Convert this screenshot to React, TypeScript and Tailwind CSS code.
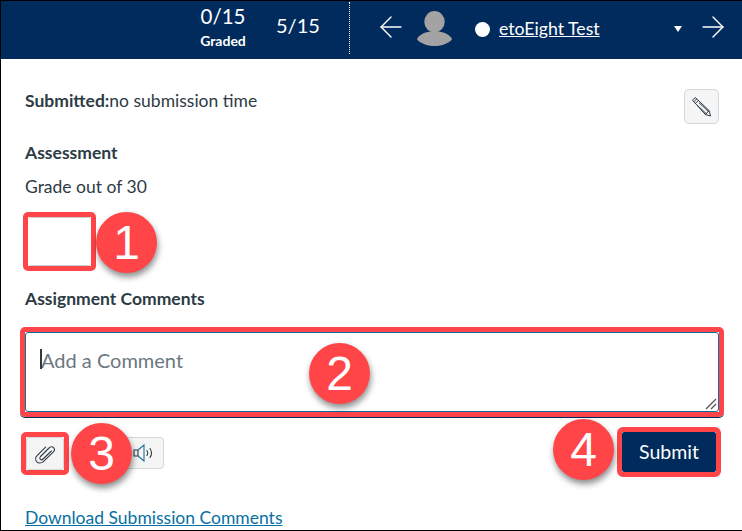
import { ArrowLeft, ArrowRight } from "lucide-react";

function Badge({ n, className }: { n: string; className: string }) {
  return (
    <div
      className={`absolute w-[61px] h-[61px] rounded-full bg-[#ff4548] text-white flex items-center justify-center text-[48px] leading-none font-['Liberation_Sans',sans-serif] shadow-[1px_4px_6px_rgba(0,0,0,0.45)] ${className}`}
    >
      {n}
    </div>
  );
}

function PencilIcon() {
  return (
    <svg width="21" height="22" viewBox="0 0 21 22" fill="none" stroke="#2d3b45" strokeWidth="1">
      <path d="M1.5 4.2 L4.2 1.5 L18 14.5 L19.6 20 L14.4 18.5 Z" />
      <path d="M2.8 5.8 L5.8 2.8 M4.4 7.4 L7.4 4.4 M6 9 L15.6 18 M8 6.8 L17.6 15.6 M14.4 18.5 L18 14.5" />
    </svg>
  );
}

function ClipIcon() {
  return (
    <svg width="22" height="20" viewBox="0 0 22 20" fill="none" stroke="#2d3b45" strokeWidth="1.1" strokeLinecap="round">
      <path d="M6.5 12.5 L15 4 C16.5 2.5 18.6 2.5 19.6 3.6 C20.8 4.9 20.5 6.8 19.2 8.1 L9.3 17.6 C7.4 19.4 4.4 19.4 2.8 17.8 C1.2 16.1 1.3 13.4 3.1 11.6 L11.6 3.2" />
      <path d="M6.5 12.5 C5.6 13.5 5.6 14.6 6.3 15.3 C7 16 8.2 15.9 9.1 15 L17.3 7" />
    </svg>
  );
}

function SpeakerIcon() {
  return (
    <svg width="21" height="18" viewBox="0 0 21 18" fill="none" stroke="#2d3b45" strokeWidth="1.1">
      <path d="M1 6 H5 V12 H1 Z" />
      <path d="M5 6 L11 1 V17 L5 12" stroke="#1f6f9f" />
      <path d="M14 6.5 C15 8 15 10 14 11.5 M17 4.5 C19 7 19 11 17 13.5" strokeLinecap="round" />
    </svg>
  );
}

export default function App() {
  return (
    <div className="relative w-[742px] h-[531px] bg-white overflow-hidden border-l border-b border-t border-black font-['Lato','Open_Sans',sans-serif] text-[#2d3b45]">
      {/* top bar */}
      <header className="h-[58px] bg-[#002b5c] text-white flex items-center -ml-px">
        <div className="ml-[198px] w-[50px] flex flex-col items-center mb-[4px]">
          <span className="text-[20.5px] leading-[26px]">0/15</span>
          <span className="text-[14px] leading-[24px] font-bold">Graded</span>
        </div>
        <span className="ml-[28px] text-[20px] leading-none w-[46px] mb-[10px]">5/15</span>
        <div className="ml-[27px] self-start mt-[1px] h-[52px] border-l border-dotted border-white" />
        <ArrowLeft size={34} strokeWidth={1} className="ml-[24px] mb-[6px]" />
        <svg className="ml-[9px] mb-[4px]" width="35" height="35" viewBox="0 0 36 36" fill="#a3a3a3">
          <ellipse cx="18" cy="11" rx="10.5" ry="11" />
          <path d="M0 29 C2 24 8 22 13 21 H23 C28 22 34 24 36 29 C33 33 26 36 18 36 C10 36 3 33 0 29 Z" />
        </svg>
        <span className="ml-[23px] w-[15px] h-[15px] rounded-full bg-white mb-[2px]" />
        <span className="ml-[9px] w-[175px] text-[17.7px] leading-none underline mb-[2px]">etoEight Test</span>
        <span className="w-0 h-0 border-x-[4.5px] border-x-transparent border-t-[6px] border-t-white mb-[2px]" />
        <ArrowRight size={34} strokeWidth={1} className="ml-[14px] mb-[6px]" />
      </header>

      {/* grading form */}
      <main className="pl-[24px] pr-[23px]">
        <div className="flex items-start justify-between pt-[30px]">
          <p className="text-[17.5px] leading-[24px]">
            <b className="font-bold">Submitted:</b>no submission time
          </p>
          <button className="w-[35px] h-[35px] rounded-[5px] border border-[#d3d8dc] bg-[#f5f5f5] flex items-center justify-center">
            <PencilIcon />
          </button>
        </div>
        <h2 className="text-[17.5px] leading-[24px] font-bold mt-[17px]">Assessment</h2>
        <p className="text-[17.5px] leading-[24px] mt-[10px]">Grade out of 30</p>
        <div className="mt-[13px] -ml-[2px] w-[73px] h-[59px] rounded-[5px] border-[5px] border-[#ff4548]">
          <div className="w-full h-full border-y border-[#c7cdd1] rounded-[3px] bg-white" />
        </div>
        <h2 className="text-[17.5px] leading-[24px] font-bold mt-[16px]">Assignment Comments</h2>
        <div className="relative mt-[16px] -ml-[5px] w-[704px] h-[90px] rounded-[5px] border-[5px] border-[#ff4548] shadow-[0_1px_0_0_#002b5c]">
          <div className="h-full border border-[#0770a3] rounded-[3px] bg-white pl-[15px] pt-[15px] text-[20px] leading-[24px] text-[#6b7780] relative">
            <span className="absolute left-[14px] top-[16px] w-[2px] h-[20px] bg-[#2d3b45]" />
            Add a Comment
            <svg className="absolute right-[1px] bottom-[1px]" width="12" height="12" viewBox="0 0 12 12" stroke="#555" strokeWidth="1.3">
              <path d="M1 11 L11 1 M6 11 L11 6" />
            </svg>
          </div>
        </div>
        <div className="flex items-start mt-[15px]">
          <div className="-ml-[4px] w-[48px] h-[43px] rounded-[5px] border-[5px] border-[#ff4548]">
            <button className="w-full h-full border border-[#d3d8dc] bg-[#f5f5f5] rounded-[3px] flex items-center justify-center">
              <ClipIcon />
            </button>
          </div>
          <button className="ml-[50px] mt-[5px] w-[45px] h-[32px] border border-[#d3d8dc] bg-[#f5f5f5] rounded-[4px] flex items-center justify-end pr-[9px]">
            <SpeakerIcon />
          </button>
          <div className="ml-auto -mt-[5px] mr-[-2px] w-[104px] h-[50px] rounded-[6px] border-[5px] border-[#ff4548]">
            <button className="w-full h-full bg-[#002b5c] text-white text-[19.5px] leading-none rounded-[2px]">Submit</button>
          </div>
        </div>
        <a className="block mt-[29px] text-[17.5px] leading-[24px] text-[#0770a3] underline">Download Submission Comments</a>
      </main>

      <Badge n="1" className="left-[95px] top-[211px]" />
      <Badge n="2" className="left-[308px] top-[342px]" />
      <Badge n="3" className="left-[70px] top-[422px]" />
      <Badge n="4" className="left-[552px] top-[418px]" />
    </div>
  );
}
